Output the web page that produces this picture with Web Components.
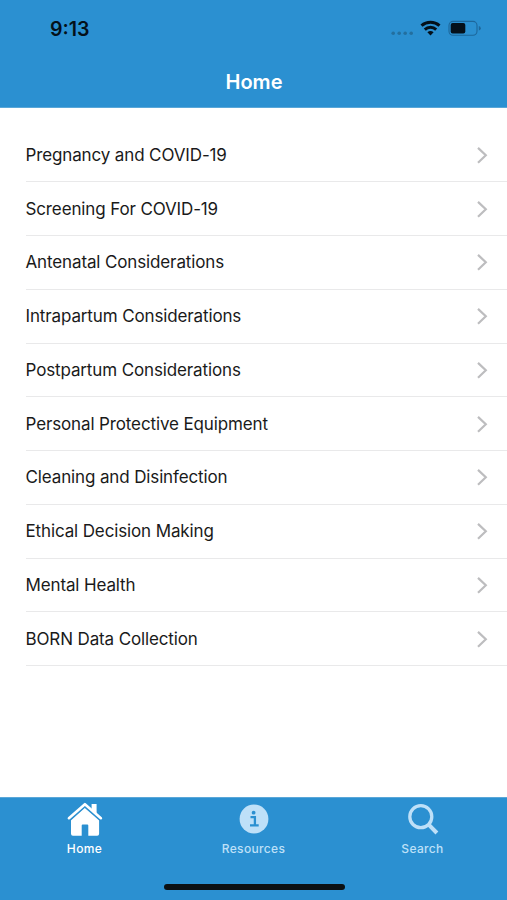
<!DOCTYPE html>
<html lang="en">
<head>
<meta charset="utf-8">
<meta name="viewport" content="width=device-width, initial-scale=1">
<title>Home</title>
<style>
    :root {
        --brand-color: #2b90d1;
        --line-color: #e9e9ea;
        --chevron-color: #bdbdbf;
        --tab-color: #bee0f8;
        --tab-active-color: #fff;
    }
    body {
        margin: 0;
        background: #fff;
        font-family: Inter, "Liberation Sans", sans-serif;
        overflow: hidden;
    }
</style>
</head>
<body>
<app-screen>
    <status-bar slot="header" time="9:13"></status-bar>
    <nav-header slot="header">Home</nav-header>

    <list-row>Pregnancy and COVID-19</list-row>
    <list-row>Screening For COVID-19</list-row>
    <list-row>Antenatal Considerations</list-row>
    <list-row>Intrapartum Considerations</list-row>
    <list-row>Postpartum Considerations</list-row>
    <list-row>Personal Protective Equipment</list-row>
    <list-row>Cleaning and Disinfection</list-row>
    <list-row>Ethical Decision Making</list-row>
    <list-row>Mental Health</list-row>
    <list-row>BORN Data Collection</list-row>

    <tab-bar slot="footer">
        <tab-item icon="home" active>Home</tab-item>
        <tab-item icon="info">Resources</tab-item>
        <tab-item icon="search">Search</tab-item>
    </tab-bar>
</app-screen>

<script>
    const icons = {
        home: `
            <path fill="currentColor" d="M5 17.6 19 5.2l14.1 12.4v14.2q0 1.9-1.9 1.9H22.3V23.4q0-1-1-1h-4.6q-1 0-1 1v10.3H6.9q-1.9 0-1.9-1.9z"/>
            <path fill="none" stroke="var(--brand-color)" stroke-width="4.6" d="M3 17 18.9 2.9 35 17"/>
            <path fill="none" stroke="currentColor" stroke-width="2.6" stroke-linecap="round" stroke-linejoin="round" d="M2.9 16.2 18.9 2.2l16 14"/>
            <path fill="currentColor" d="M25.6 2h5v10.5l-5-4.5z"/>`,
        info: `
            <circle cx="19" cy="17" r="14.4" fill="currentColor"/>
            <circle cx="18.6" cy="10.7" r="1.9" fill="var(--brand-color)"/>
            <path fill="none" stroke="var(--brand-color)" stroke-width="2.3" d="M15.5 15.1h4.4v7.8M15 23.4h8.7"/>`,
        search: `
            <circle cx="16.8" cy="14.7" r="11" fill="none" stroke="currentColor" stroke-width="3.3"/>
            <path fill="none" stroke="currentColor" stroke-width="4" d="m24.7 22.7 8.2 8.3"/>`
    };

    class AppScreen extends HTMLElement {
        constructor() {
            super();
            this.attachShadow({ mode: 'open' });
        }

        connectedCallback() {
            this.shadowRoot.innerHTML = `
                <style>
                    :host {
                        display: flex;
                        flex-direction: column;
                        height: 900px;
                    }
                    header {
                        flex: none;
                        box-sizing: border-box;
                        height: 108px;
                        background: var(--brand-color);
                        border-bottom: 1px solid #5aa7d8;
                    }
                    main {
                        flex: 1;
                        padding-top: 20.5px;
                    }
                </style>
                <header><slot name="header"></slot></header>
                <main><slot></slot></main>
                <slot name="footer"></slot>
            `;
        }
    }

    class StatusBar extends HTMLElement {
        constructor() {
            super();
            this.attachShadow({ mode: 'open' });
        }

        connectedCallback() {
            this.shadowRoot.innerHTML = `
                <style>
                    :host {
                        display: flex;
                        justify-content: space-between;
                        align-items: center;
                        box-sizing: border-box;
                        height: 58px;
                        padding: 0 25px 0 50px;
                        color: #04101a;
                    }
                    .time {
                        font-size: 19.6px;
                        font-weight: 600;
                    }
                    svg {
                        display: block;
                    }
                </style>
                <span class="time">${this.getAttribute('time')}</span>
                <svg width="92" height="20" viewBox="0 0 92 20">
                    <g fill="#236f9f">
                        <circle cx="3.2" cy="14.2" r="1.8"/>
                        <circle cx="9.2" cy="14.2" r="1.8"/>
                        <circle cx="15.2" cy="14.2" r="1.8"/>
                        <circle cx="21.2" cy="14.2" r="1.8"/>
                    </g>
                    <g fill="none" stroke="currentColor" stroke-width="3">
                        <path d="M31.5 6.6a13.7 13.7 0 0 1 18 0"/>
                        <path d="M34.8 10.6a8.4 8.4 0 0 1 11.4 0"/>
                    </g>
                    <path fill="currentColor" d="M37.4 13.3q3.1-2.4 6.2 0L40.5 16.5z"/>
                    <rect x="59" y="2.4" width="28" height="13.8" rx="4" fill="none" stroke="#1d679b" stroke-width="1.1"/>
                    <rect x="60.7" y="4" width="14.6" height="10.6" rx="2" fill="currentColor"/>
                    <path fill="#1d679b" d="M88.8 7q2 .6 2 2.3t-2 2.3z"/>
                </svg>
            `;
        }
    }

    class NavHeader extends HTMLElement {
        constructor() {
            super();
            this.attachShadow({ mode: 'open' });
        }

        connectedCallback() {
            this.shadowRoot.innerHTML = `
                <style>
                    :host {
                        display: block;
                        text-align: center;
                        color: #fff;
                    }
                    h1 {
                        margin: 0;
                        padding-left: 1px;
                        font-size: 20px;
                        font-weight: 600;
                        line-height: 48px;
                    }
                </style>
                <h1><slot></slot></h1>
            `;
        }
    }

    class ListRow extends HTMLElement {
        constructor() {
            super();
            this.attachShadow({ mode: 'open' });
        }

        connectedCallback() {
            this.shadowRoot.innerHTML = `
                <style>
                    :host {
                        display: flex;
                        justify-content: space-between;
                        align-items: center;
                        box-sizing: border-box;
                        height: 53.77px;
                        margin-left: 25.5px;
                        padding-right: 19px;
                        border-bottom: 1px solid var(--line-color);
                        color: #1a1a1a;
                        font-size: 17px;
                        letter-spacing: -0.13px;
                    }
                    svg {
                        display: block;
                    }
                </style>
                <span><slot></slot></span>
                <svg width="12" height="18" viewBox="0 0 12 18">
                    <path d="m2 1.9 7.8 7.4L2 16.7" fill="none" stroke="var(--chevron-color)" stroke-width="2.2"/>
                </svg>
            `;
        }
    }

    class TabBar extends HTMLElement {
        constructor() {
            super();
            this.attachShadow({ mode: 'open' });
        }

        connectedCallback() {
            this.shadowRoot.innerHTML = `
                <style>
                    :host {
                        display: flex;
                        flex-direction: column;
                        justify-content: space-between;
                        align-items: center;
                        flex: none;
                        box-sizing: border-box;
                        height: 103px;
                        padding: 4px 0 10px;
                        border-top: 1px solid #5aa7d8;
                        background: var(--brand-color);
                    }
                    nav {
                        display: grid;
                        grid-template-columns: repeat(3, 1fr);
                        width: 100%;
                    }
                    .indicator {
                        width: 181px;
                        height: 6px;
                        margin-left: 1px;
                        border-radius: 3px;
                        background: #0b1013;
                    }
                </style>
                <nav><slot></slot></nav>
                <div class="indicator"></div>
            `;
        }
    }

    class TabItem extends HTMLElement {
        constructor() {
            super();
            this.attachShadow({ mode: 'open' });
        }

        connectedCallback() {
            this.shadowRoot.innerHTML = `
                <style>
                    :host {
                        display: flex;
                        flex-direction: column;
                        align-items: center;
                        gap: 4px;
                        color: var(--tab-color);
                        font-size: 12px;
                        font-weight: 500;
                        line-height: 16px;
                        letter-spacing: 0.35px;
                    }
                    :host([active]) {
                        color: var(--tab-active-color);
                    }
                    svg {
                        display: block;
                    }
                </style>
                <svg width="38" height="35" viewBox="0 0 38 35">${icons[this.getAttribute('icon')]}</svg>
                <span><slot></slot></span>
            `;
        }
    }

    customElements.define('app-screen', AppScreen);
    customElements.define('status-bar', StatusBar);
    customElements.define('nav-header', NavHeader);
    customElements.define('list-row', ListRow);
    customElements.define('tab-bar', TabBar);
    customElements.define('tab-item', TabItem);
</script>
</body>
</html>
